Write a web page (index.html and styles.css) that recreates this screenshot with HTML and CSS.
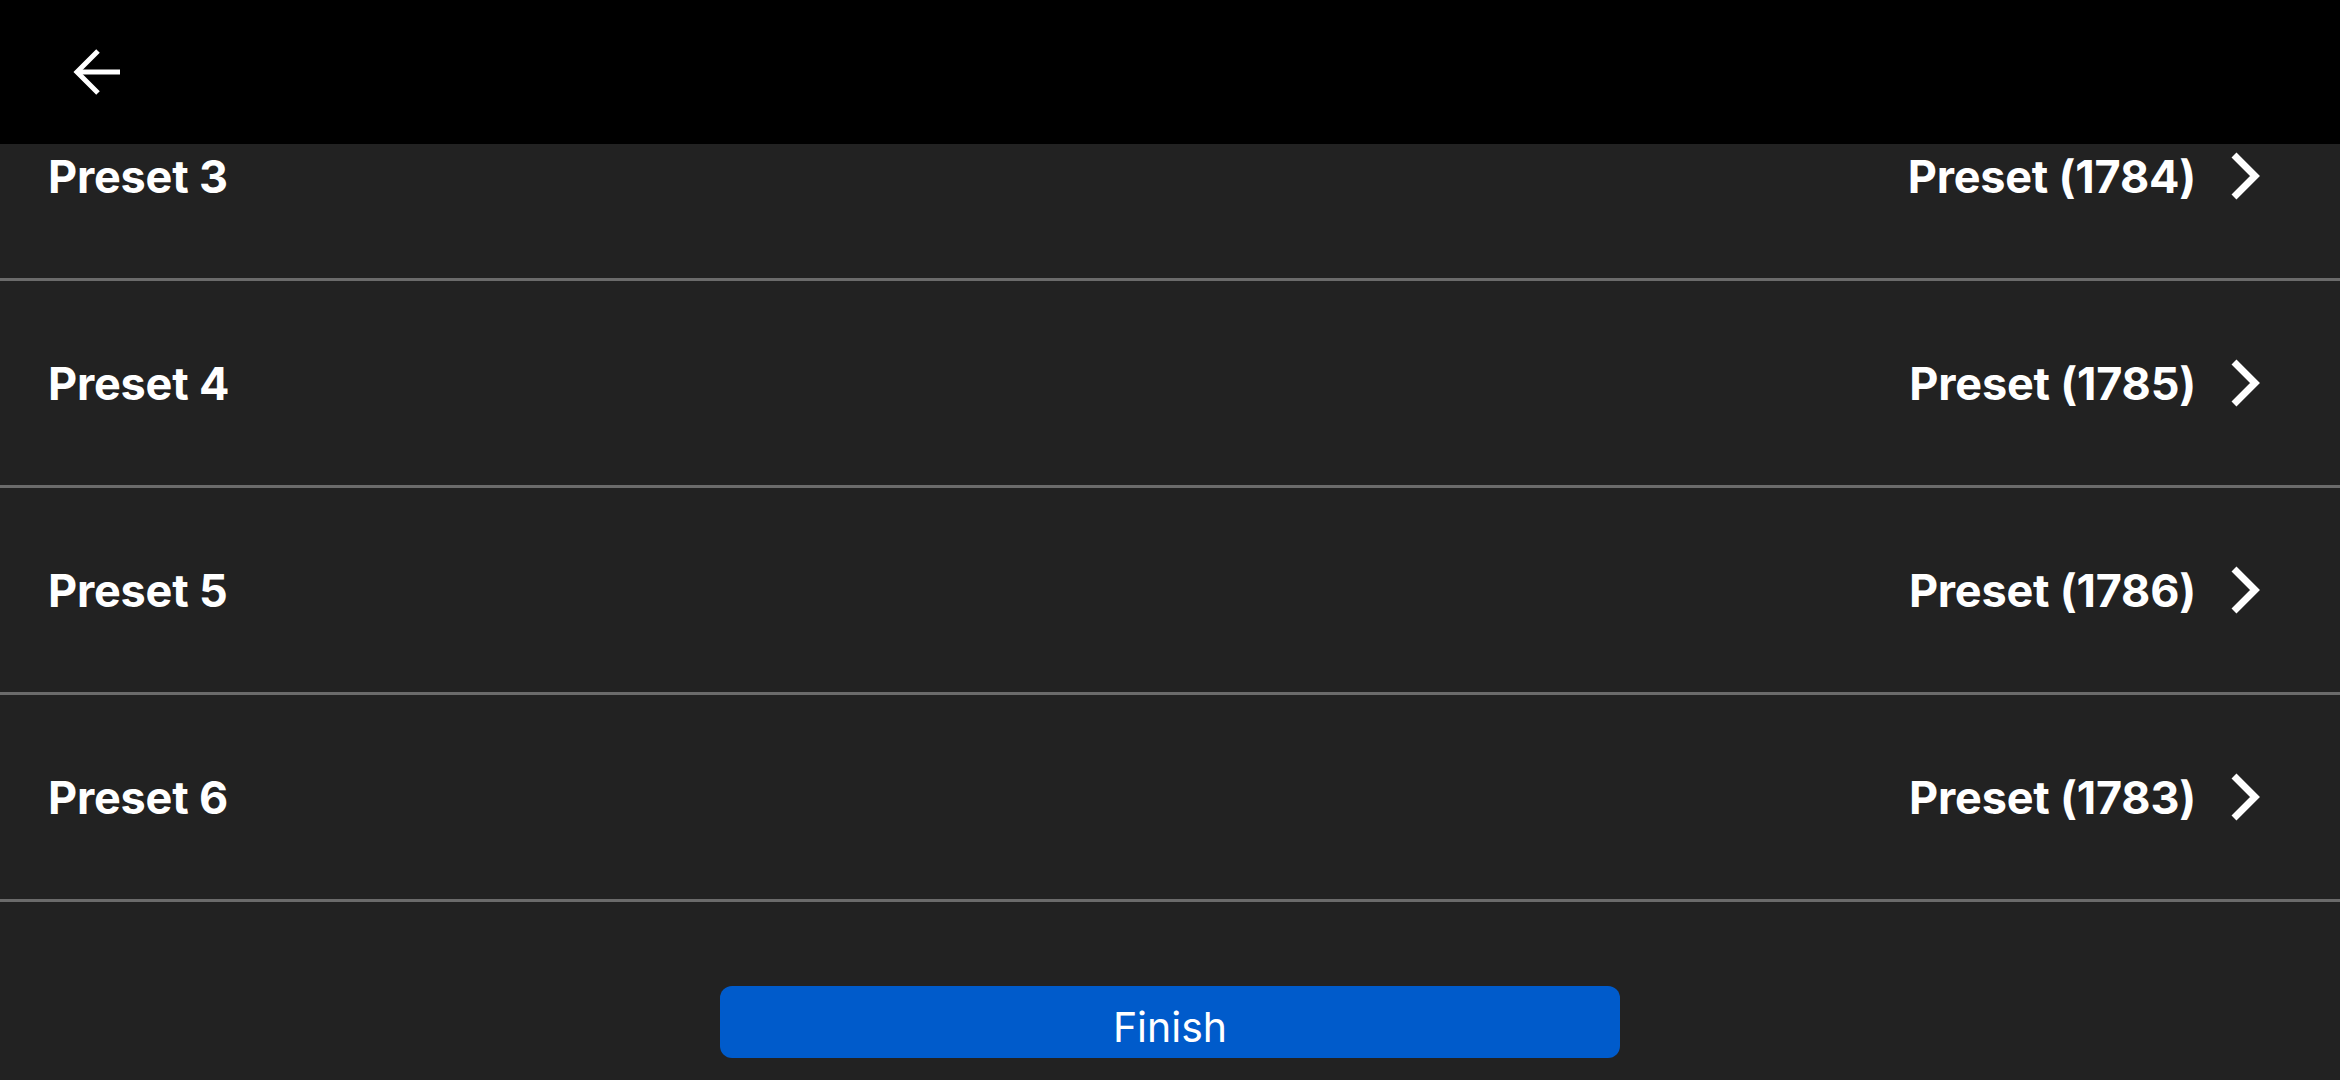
FILE: index.html
```html
<!DOCTYPE html>
<html lang="en">
<head>
<meta charset="utf-8">
<title>Presets</title>
<link rel="stylesheet" href="styles.css">
</head>
<body>
<div class="app">
  <header class="topbar">
    <button class="back" aria-label="Back">
      <svg width="56" height="56" viewBox="0 0 56 56" fill="none" stroke="#fff" stroke-width="5" stroke-linejoin="miter">
        <path d="M52 28 H9"/>
        <path d="M30 7 L9 28 L30 49"/>
      </svg>
    </button>
  </header>
  <main class="list">
    <div class="rows">
      <div class="row">
        <span class="name">Preset 3</span>
        <span class="value">Preset (1784)
          <svg class="chev" width="32" height="50" viewBox="0 0 32 50" fill="none" stroke="#fff" stroke-width="7"><path d="M4 4 L25 25 L4 46"/></svg>
        </span>
      </div>
      <div class="row">
        <span class="name">Preset 4</span>
        <span class="value">Preset (1785)
          <svg class="chev" width="32" height="50" viewBox="0 0 32 50" fill="none" stroke="#fff" stroke-width="7"><path d="M4 4 L25 25 L4 46"/></svg>
        </span>
      </div>
      <div class="row">
        <span class="name">Preset 5</span>
        <span class="value">Preset (1786)
          <svg class="chev" width="32" height="50" viewBox="0 0 32 50" fill="none" stroke="#fff" stroke-width="7"><path d="M4 4 L25 25 L4 46"/></svg>
        </span>
      </div>
      <div class="row">
        <span class="name">Preset 6</span>
        <span class="value">Preset (1783)
          <svg class="chev" width="32" height="50" viewBox="0 0 32 50" fill="none" stroke="#fff" stroke-width="7"><path d="M4 4 L25 25 L4 46"/></svg>
        </span>
      </div>
    </div>
  </main>
  <footer class="footer">
    <button class="finish">Finish</button>
  </footer>
</div>
</body>
</html>
```

FILE: styles.css
```css
html, body {
  margin: 0;
  padding: 0;
  height: 100%;
  background: #222222;
  overflow: hidden;
}

body {
  font-family: Inter, "Liberation Sans", Arial, sans-serif;
  color: #ffffff;
}

.app {
  display: flex;
  flex-direction: column;
  height: 100vh;
}

.topbar {
  height: 144px;
  flex: 0 0 144px;
  background: #000000;
  display: flex;
  align-items: center;
  padding-left: 68px;
  position: relative;
  z-index: 1;
}

.back {
  background: none;
  border: 0;
  padding: 0;
  margin: 0;
  width: 56px;
  height: 56px;
  display: flex;
}

.list {
  flex: 1 1 auto;
  overflow: hidden;
}

.rows {
  margin-top: -70px;
}

.row {
  height: 204px;
  border-bottom: 3px solid #6b6b6b;
  display: flex;
  align-items: center;
  justify-content: space-between;
  padding: 0 80px 0 48px;
  font-size: 45px;
  font-weight: 700;
  letter-spacing: -0.2px;
}

.name, .value {
  line-height: 1;
  padding-top: 0;
}

.value {
  display: flex;
  align-items: center;
  gap: 34px;
}

.chev {
  display: block;
  margin-top: 0;
  margin-right: -2px;
}

.footer {
  flex: 0 0 auto;
  display: flex;
  justify-content: center;
  padding: 84px 0 22px;
}

.finish {
  width: 900px;
  height: 72px;
  border: 0;
  border-radius: 12px;
  background: #005bcb;
  color: #ffffff;
  font-family: Inter, "Liberation Sans", Arial, sans-serif;
  font-size: 41px;
  font-weight: 400;
  padding: 10px 0 0;
  line-height: 1;
}
```
